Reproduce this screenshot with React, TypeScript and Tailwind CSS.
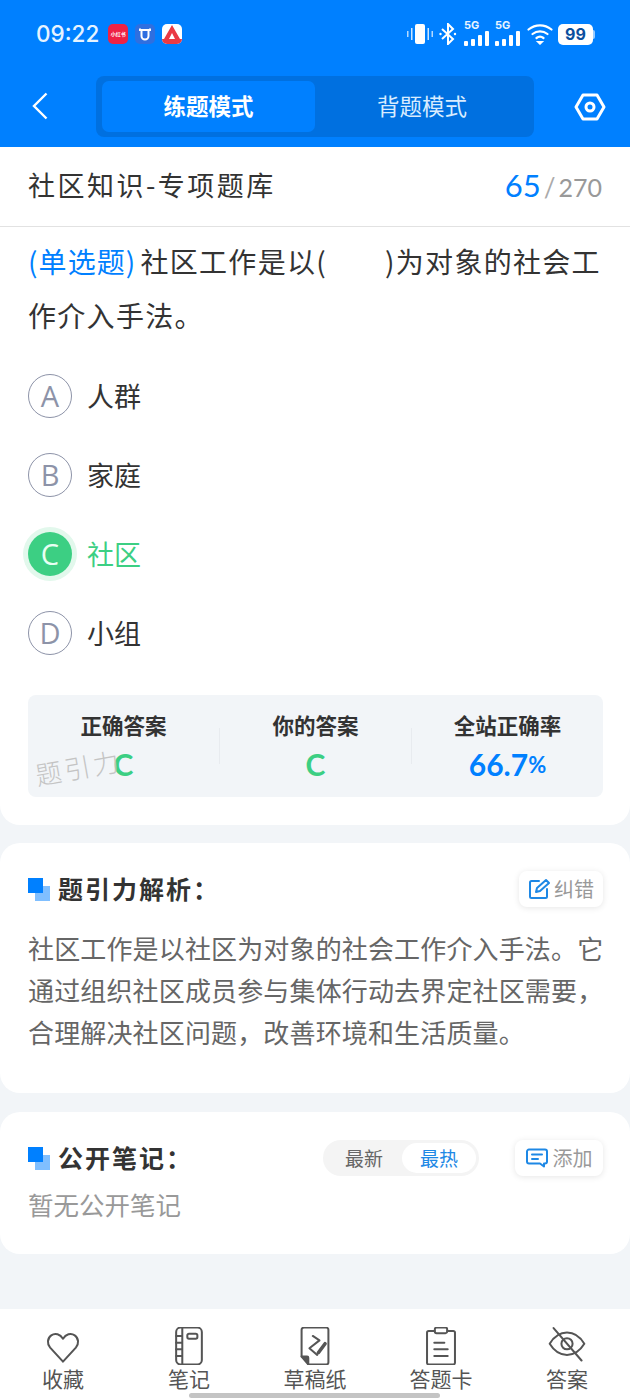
import React from 'react'

const cjk = { fontFamily: '"Noto Sans CJK SC", "Noto Sans", sans-serif' }

const options = [
  { key: 'A', text: '人群' },
  { key: 'B', text: '家庭' },
  { key: 'C', text: '社区', picked: true },
  { key: 'D', text: '小组' },
]

function StatusIcons() {
  return (
    <div className="flex items-center">
      <svg width="26" height="22" viewBox="0 0 26 22" fill="white">
        <rect x="8" y="1" width="10" height="20" rx="2" />
        <rect x="0" y="8" width="1.5" height="6" opacity=".7" />
        <rect x="4" y="5" width="1.5" height="12" opacity=".8" />
        <rect x="20.5" y="5" width="1.5" height="12" opacity=".8" />
        <rect x="24.5" y="8" width="1.5" height="6" opacity=".7" />
      </svg>
      <svg width="18" height="22" viewBox="0 0 18 22" fill="none" stroke="white" strokeWidth="2" className="ml-[6px]">
        <path d="M3 6l11 10-5 5V1l5 5L3 16" />
        <circle cx="1.500" cy="11" r="1.200" fill="white" stroke="none" />
        <circle cx="16" cy="11" r="1.200" fill="white" stroke="none" />
      </svg>
      <div className="ml-[7px]"><Signal /></div>
      <div className="ml-[5px]"><Signal /></div>
      <svg width="26" height="22" viewBox="0 0 26 22" fill="none" stroke="white" strokeWidth="2.2" strokeLinecap="round" className="ml-[6px]">
        <path d="M1.500 6.500c7-5.500 16-5.500 23 0" />
        <path d="M5.500 11c4.500-3.500 10.500-3.500 15 0" />
        <path d="M9.500 15c2-1.500 5-1.500 7 0" />
        <path d="M11.500 19h3l-1.500 1.500z" fill="white" />
      </svg>
      <div className="flex items-center ml-[5px]">
        <div className="w-[35px] h-[21px] bg-white rounded-[5px] flex items-center justify-center text-[#0a4f9e] text-[16px] font-bold font-['Inter',sans-serif]">99</div>
        <div className="w-[2px] h-[9px] bg-white/60 rounded-r-sm" />
      </div>
    </div>
  )
}

function Signal() {
  return (
    <div className="relative w-[26px] h-[24px]">
      <span className="absolute left-0 top-[-3px] text-[#e8f4ff] text-[11px] font-bold leading-[12px] font-['Inter',sans-serif]">5G</span>
      <div className="absolute left-0 bottom-0 flex items-end gap-[3px]">
        <div className="w-[4px] h-[5px] bg-white rounded-[1px]" />
        <div className="w-[4px] h-[7px] bg-white rounded-[1px]" />
        <div className="w-[4px] h-[11px] bg-white rounded-[1px]" />
        <div className="w-[4px] h-[15px] bg-white rounded-[1px]" />
      </div>
    </div>
  )
}

function AppBadges() {
  return (
    <div className="flex items-center gap-[7px]">
      <div className="w-[20px] h-[20px] rounded-[5px] bg-[#ee2244] text-white text-[5px] font-bold flex items-center justify-center">小红书</div>
      <div className="w-[20px] h-[20px] rounded-[5px] bg-[#2f6fe0] flex items-center justify-center">
        <svg width="12" height="13" viewBox="0 0 12 13" fill="none" stroke="white" strokeWidth="2">
          <path d="M1 0.500v1.500h10V0.500M2.500 2v6a3.500 3.500 0 0 0 7 0V2" />
        </svg>
      </div>
      <div className="w-[20px] h-[20px] rounded-[5px] bg-white overflow-hidden flex flex-col">
        <svg width="20" height="15" viewBox="0 0 20 15">
          <path d="M10 1L18 15h-5l-3-6-3 6H2z" fill="#ea3a44" />
        </svg>
        <div className="h-[5px] bg-[#ea3a44]" />
      </div>
    </div>
  )
}

function SectionMark() {
  return (
    <div className="relative w-[22px] h-[23px] shrink-0">
      <div className="absolute right-0 bottom-0 w-[15px] h-[15px] bg-[#80bfff]" />
      <div className="absolute left-0 top-0 w-[15px] h-[15px] bg-[#0080ff]" />
    </div>
  )
}

function Stat({ title, children }: { title: string; children: React.ReactNode }) {
  return (
    <div className="flex-1 flex flex-col items-center">
      <div className="text-[#333] text-[21.5px] font-bold leading-[30px]">{title}</div>
      <div className="mt-[8px] h-[32px] flex items-center font-bold font-['Lato',sans-serif]">{children}</div>
    </div>
  )
}

const iconStroke = { fill: 'none', stroke: '#555', strokeWidth: 1.800, strokeLinecap: 'round' as const, strokeLinejoin: 'round' as const }

const tabs = [
  {
    label: '收藏',
    icon: (
      <svg width="38" height="38" viewBox="0 0 34 34" {...iconStroke}>
        <path d="M17 31L5.500 18.500C2.500 15 3 10 6.500 7.500c3.500-2.500 8-1 10.500 3 2.500-4 7-5.500 10.500-3 3.500 2.500 4 7.500 1 11z" />
      </svg>
    ),
  },
  {
    label: '笔记',
    icon: (
      <svg width="38" height="38" viewBox="0 0 34 34" {...iconStroke}>
        <rect x="5.500" y="0.500" width="23" height="33" rx="4" />
        <path d="M11 0.500v33M5.500 8h5.500M5.500 14h5.500M5.500 20h5.500M5.500 26h5.500" />
        <rect x="15.500" y="6" width="9" height="4.500" rx="1.500" />
      </svg>
    ),
  },
  {
    label: '草稿纸',
    icon: (
      <svg width="38" height="38" viewBox="0 0 34 34" {...iconStroke}>
        <path d="M11 33.500h16a2 2 0 0 0 2-2V2.500a2 2 0 0 0-2-2H7a2 2 0 0 0-2 2V26.500z" />
        <path d="M5 26.500h5a1 1 0 0 1 1 1v6" fill="#555" />
        <path d="M15 8l6 4-9 7 7 6" />
        <path d="M20 23l6-8" strokeWidth="3.200" />
      </svg>
    ),
  },
  {
    label: '答题卡',
    icon: (
      <svg width="38" height="38" viewBox="0 0 34 34" {...iconStroke}>
        <path d="M11 3.500H6a1.500 1.500 0 0 0-1.500 1.500V32A1.500 1.500 0 0 0 6 33.500h22a1.500 1.500 0 0 0 1.500-1.500V5A1.500 1.500 0 0 0 28 3.500h-5" />
        <rect x="11.500" y="0.500" width="11" height="5" rx="1.500" />
        <path d="M11 14h9M11 20h12M11 26h12" />
      </svg>
    ),
  },
  {
    label: '答案',
    icon: (
      <svg width="38" height="38" viewBox="0 0 34 34" {...iconStroke}>
        <path d="M1.500 15c4-6.500 9-10 15.500-10S28.500 8.500 32.500 15c-4 6.500-9 10-15.500 10S5.500 21.500 1.500 15z" />
        <circle cx="17" cy="15" r="5" />
        <path d="M5 1l25 29" />
      </svg>
    ),
  },
]

export default function App() {
  return (
    <div className="w-[630px] h-[1400px] bg-[#f2f5f8] flex flex-col overflow-hidden relative" style={cjk}>
      <header className="bg-[#0080ff] h-[147px] shrink-0 flex flex-col">
        <div className="h-[76px] pl-[36px] pr-[35px] pb-[8px] flex items-center justify-between">
          <div className="flex items-center gap-[9px]">
            <span className="text-[#e6f3ff] text-[22.5px] font-medium font-['Inter',sans-serif]">09:22</span>
            <AppBadges />
          </div>
          <StatusIcons />
        </div>
        <div className="flex items-start pl-[32px] pr-[24px]">
          <svg width="16" height="28" viewBox="0 0 16 28" fill="none" stroke="white" strokeWidth="2.400" className="mt-[16px]">
            <path d="M14.500 1.500L2 14l12.500 12.500" />
          </svg>
          <div className="ml-[48px] w-[438px] h-[61px] bg-[#0070e0] rounded-[8px] py-[5px] pl-[6px] pr-[5px] flex">
            <div className="w-[213px] bg-[#0080ff] rounded-[7px] flex items-center justify-center text-white text-[22.5px] font-bold pb-[2px]">练题模式</div>
            <div className="flex-1 flex items-center justify-center text-[#d8ecff] text-[22.5px] pb-[2px]">背题模式</div>
          </div>
          <svg width="32" height="28" viewBox="0 0 32 28" fill="none" stroke="white" strokeWidth="3" className="ml-auto mt-[17px]">
            <path d="M9 2h14l7 12-7 12H9L2 14z" strokeLinejoin="round" />
            <circle cx="16" cy="14" r="4" />
          </svg>
        </div>
      </header>

      <main className="flex-1 flex flex-col">
        <section className="bg-white rounded-b-[20px] h-[678px]">
          <div className="h-[80px] px-[28px] pb-[2px] flex items-center justify-between border-b border-[#e2e2e2]">
            <div className="text-[#333] text-[27px] tracking-[2.500px]">社区知识-专项题库</div>
            <div className="flex items-baseline font-['Lato',sans-serif]">
              <span className="text-[#0080ff] text-[31px]">65</span>
              <span className="text-[#aaa] text-[26px] ml-[3px]">/</span>
              <span className="text-[#999] text-[25px] ml-[3px]">270</span>
            </div>
          </div>
          <div className="pl-[28px] pr-[20px] pt-[7px] text-[28px] leading-[54px] tracking-[1.300px] text-[#333]">
            <span className="text-[#0080ff] tracking-[1.100px] mr-[4px]">(单选题)</span>社区工作是以(<span className="inline-block w-[58px]" />)为对象的社会工作介入手法。
          </div>
          <div className="mt-[32px] pl-[28px] flex flex-col gap-[35px]">
            {options.map((o) => (
              <div key={o.key} className="flex items-center gap-[15px] h-[44px]">
                {o.picked ? (
                  <div className="w-[44px] h-[44px] rounded-full bg-[#3ccf83] ring-[5px] ring-[#e2f8ec] text-[#e8fff3] text-[29px] flex items-center justify-center font-['Open_Sans',sans-serif]">{o.key}</div>
                ) : (
                  <div className="w-[44px] h-[44px] rounded-full border border-[#8d93a8] text-[#8d93a8] text-[29px] flex items-center justify-center font-['Open_Sans',sans-serif]">{o.key}</div>
                )}
                <span className={o.picked ? 'text-[27px] text-[#3ccf83]' : 'text-[27px] text-[#333]'}>{o.text}</span>
              </div>
            ))}
          </div>
          <div className="relative mx-[28px] mt-[40px] w-[575px] h-[102px] bg-[#f2f5f8] rounded-[8px] flex items-start pt-[15px]">
            <Stat title="正确答案"><span className="text-[#3ccf83] text-[30px]">C</span></Stat>
            <div className="w-px h-[36px] mt-[18px] bg-[#e8ebef]" />
            <Stat title="你的答案"><span className="text-[#3ccf83] text-[30px]">C</span></Stat>
            <div className="w-px h-[36px] mt-[18px] bg-[#e8ebef]" />
            <Stat title="全站正确率">
              <span className="text-[#0080ff] text-[30px]">66.7</span>
              <span className="text-[#0080ff] text-[22px]">%</span>
            </Stat>
            <span className="absolute left-[7px] top-[54px] -rotate-[10deg] text-[#c4c4c4] text-[26px] tracking-[3px] font-light leading-[36px]">题引力</span>
          </div>
        </section>

        <section className="mt-[18px] bg-white rounded-[20px] h-[250px] pl-[28px] pr-[27px] pt-[28px]">
          <div className="flex items-center justify-between h-[36px]">
            <div className="flex items-center gap-[8px]">
              <SectionMark />
              <span className="text-[#333] text-[25px] font-bold tracking-[2px]">题引力解析：</span>
            </div>
            <div className="w-[84px] h-[36px] rounded-[8px] bg-white shadow-[0_1px_6px_rgba(0,0,0,0.1)] flex items-center justify-center gap-[4px]">
              <svg width="22" height="22" viewBox="0 0 22 22" fill="none" stroke="#1e88e5" strokeWidth="2" strokeLinecap="round" strokeLinejoin="round">
                <path d="M11 3H3.500A1.500 1.500 0 0 0 2 4.500v14A1.500 1.500 0 0 0 3.500 20h14a1.500 1.500 0 0 0 1.500-1.500V11" />
                <path d="M8 14l1-4 9-8 3 3-9 8z" />
              </svg>
              <span className="text-[#999] text-[20px]">纠错</span>
            </div>
          </div>
          <p className="mt-[20px] text-[#666] text-[26px] leading-[42px] tracking-[0.150px] w-[576px]">
            社区工作是以社区为对象的社会工作介入手法。它通过组织社区成员参与集体行动去界定社区需要，合理解决社区问题，改善环境和生活质量。
          </p>
        </section>

        <section className="mt-[19px] bg-white rounded-[20px] h-[142px] pl-[28px] pr-[27px] pt-[28px]">
          <div className="flex items-center h-[36px]">
            <SectionMark />
            <span className="ml-[8px] text-[#333] text-[25px] font-bold tracking-[2px]">公开笔记：</span>
            <div className="ml-auto w-[156px] h-[36px] rounded-full bg-[#f4f4f4] p-[3px] flex items-center text-[19px]">
              <div className="w-[76px] text-center text-[#666]">最新</div>
              <div className="flex-1 h-full rounded-full bg-white flex items-center justify-center text-[#1e88e5]">最热</div>
            </div>
            <div className="ml-[36px] w-[88px] h-[36px] rounded-[8px] bg-white shadow-[0_1px_6px_rgba(0,0,0,0.1)] flex items-center justify-center gap-[5px]">
              <svg width="22" height="20" viewBox="0 0 22 20" fill="none" stroke="#1e88e5" strokeWidth="2" strokeLinecap="round" strokeLinejoin="round">
                <path d="M3 1.500h16a2 2 0 0 1 2 2v10a2 2 0 0 1-2 2h-1v3l-4-3H3a2 2 0 0 1-2-2v-10a2 2 0 0 1 2-2z" />
                <path d="M6 6.500h10M6 11h6" />
              </svg>
              <span className="text-[#999] text-[20px]">添加</span>
            </div>
          </div>
          <div className="mt-[10px] text-[#999] text-[25.500px] leading-[36px]">暂无公开笔记</div>
        </section>
      </main>

      <nav className="h-[91px] shrink-0 bg-white flex pt-[18px]">
        {tabs.map((t) => (
          <div key={t.label} className="w-[126px] flex flex-col items-center">
            {t.icon}
            <span className="text-[#555] text-[21px] leading-[26px]">{t.label}</span>
          </div>
        ))}
      </nav>
      <div className="absolute left-[189px] bottom-[2px] w-[251px] h-[5px] rounded-full bg-[#c4c4c4]" />
    </div>
  )
}
